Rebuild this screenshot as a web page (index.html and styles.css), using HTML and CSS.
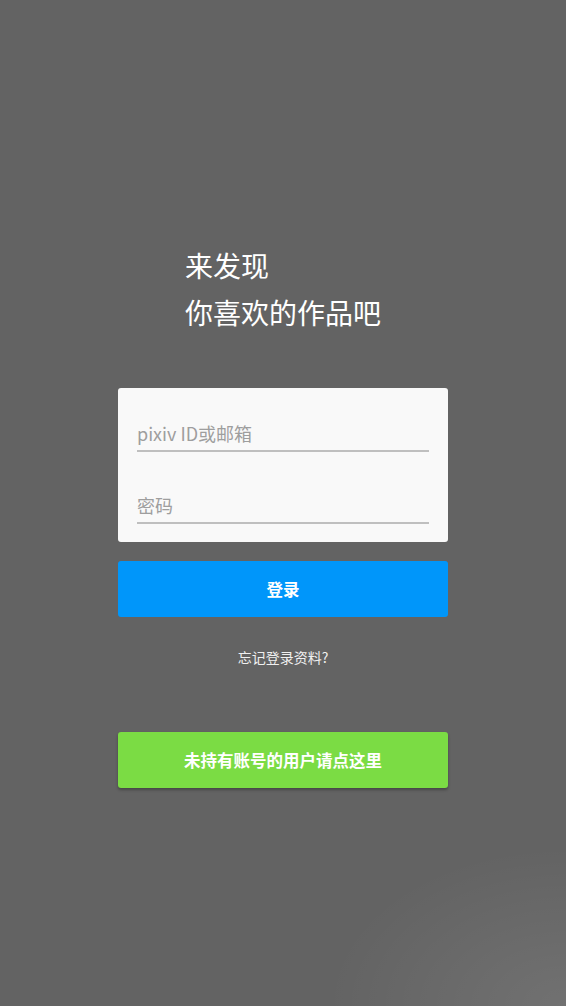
FILE: index.html
```html
<!DOCTYPE html>
<html lang="zh-CN">
<head>
<meta charset="utf-8">
<title>pixiv 登录</title>
<link rel="stylesheet" href="styles.css">
</head>
<body>
<main class="page">
  <h1 class="headline">来发现<br>你喜欢的作品吧</h1>
  <form class="card">
    <div class="field"><span class="placeholder">pixiv ID或邮箱</span></div>
    <div class="field"><span class="placeholder">密码</span></div>
  </form>
  <button class="btn btn-login" type="button">登录</button>
  <a class="forgot">忘记登录资料?</a>
  <button class="btn btn-signup" type="button">未持有账号的用户请点这里</button>
</main>
</body>
</html>
```
FILE: styles.css
```css
html, body {
  margin: 0;
  padding: 0;
}
body {
  width: 566px;
  height: 1006px;
  overflow: hidden;
  background: #636363;
  background-image: radial-gradient(ellipse 240px 160px at 100% 100%, rgba(255,255,255,0.09), rgba(255,255,255,0) 100%);
  font-family: "Noto Sans CJK SC", "Noto Sans", sans-serif;
}
.page {
  display: flex;
  flex-direction: column;
  align-items: center;
  padding-top: 242px;
}
.headline {
  margin: 0;
  font-size: 28px;
  font-weight: 400;
  line-height: 47px;
  color: #ffffff;
  text-align: left;
}
.card {
  margin-top: 52px;
  width: 330px;
  box-sizing: border-box;
  background: #f9f9f9;
  border-radius: 3px;
  padding: 28px 19px 18px;
  display: flex;
  flex-direction: column;
  gap: 36px;
}
.field {
  height: 34px;
  line-height: 34px;
  border-bottom: 2px solid #bfbfbf;
  font-size: 18px;
}
.placeholder {
  color: #9e9e9e;
}
.btn {
  width: 330px;
  height: 56px;
  border: none;
  border-radius: 3px;
  color: #ffffff;
  font-family: "Noto Sans CJK SC", "Noto Sans", sans-serif;
  font-size: 16.5px;
  font-weight: 700;
  padding: 0;
}
.btn-login {
  margin-top: 19px;
  background: #0096fa;
}
.forgot {
  margin-top: 30px;
  font-size: 14px;
  line-height: 20px;
  color: #f0f0f0;
}
.btn-signup {
  margin-top: 65px;
  background: #7bdc44;
  box-shadow: 0 2px 3px rgba(0,0,0,0.3);
}
```
